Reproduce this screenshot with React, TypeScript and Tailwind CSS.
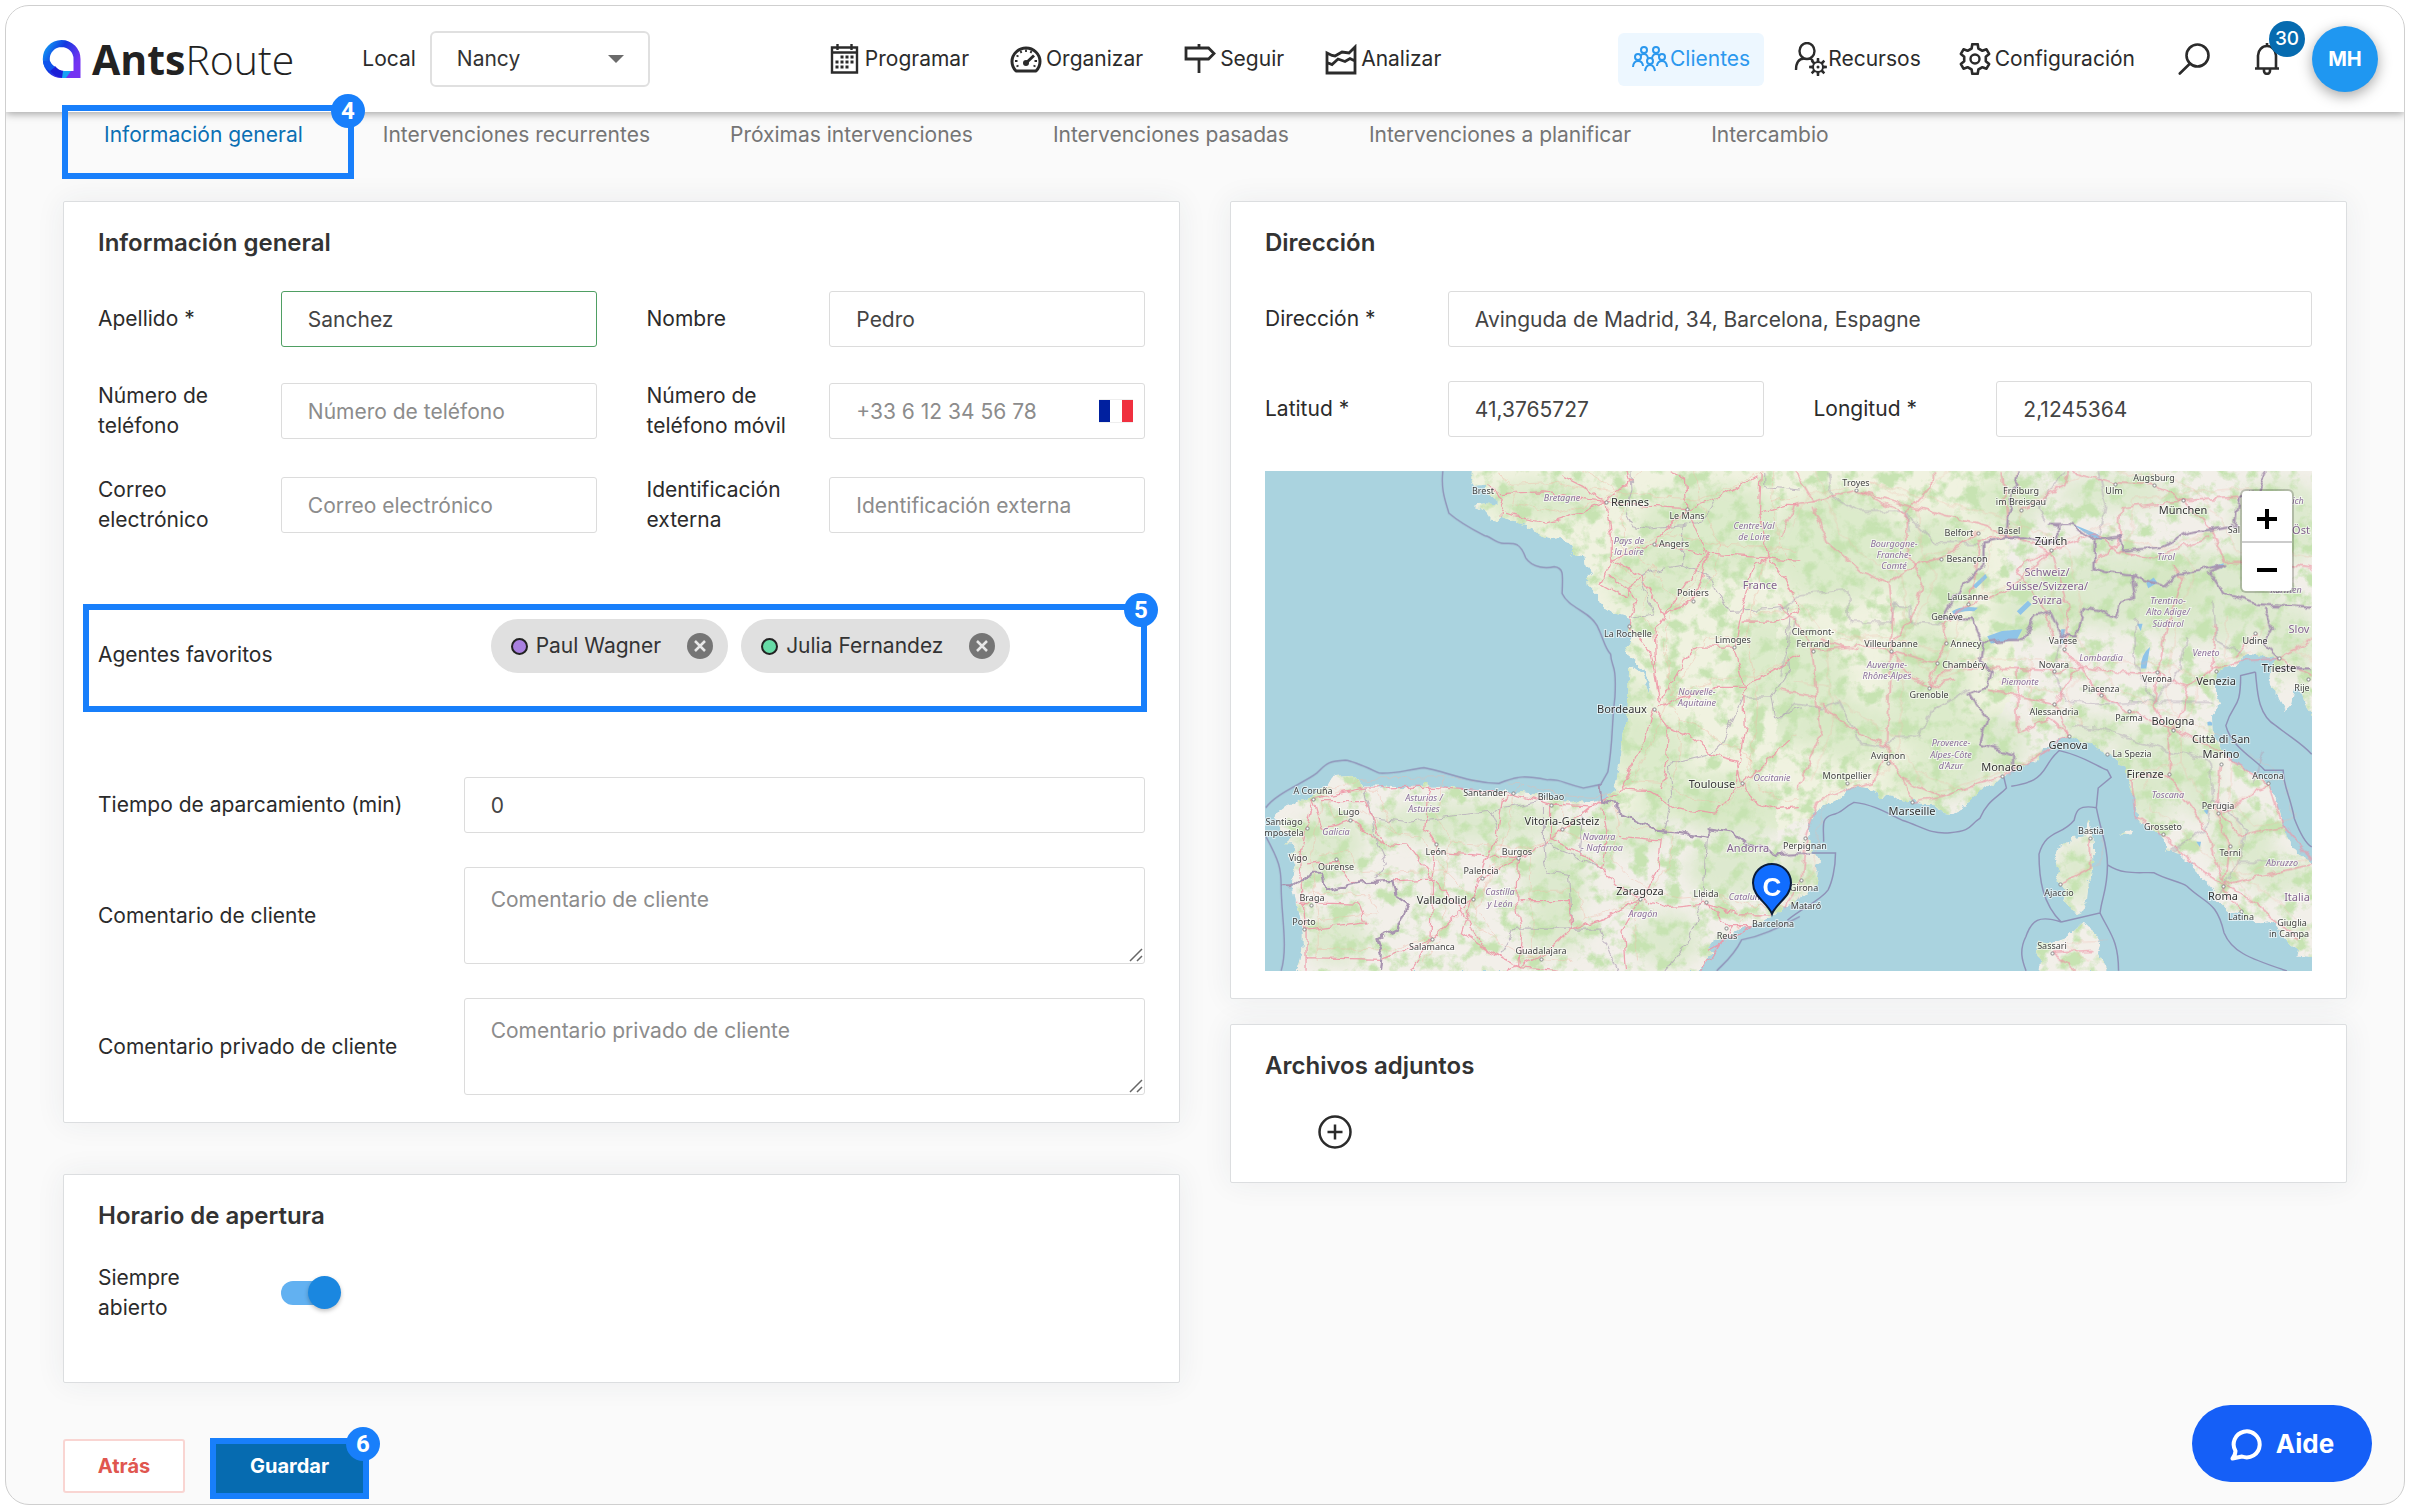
import React, { useState } from "react";

type Pt = [number, number];

/* ---------- icons ---------- */

const line = { fill: "none", stroke: "currentColor", strokeWidth: 2.4 } as const;

function LogoMark() {
  return (
    <svg viewBox="0 0 40 40" className="h-10 w-10" aria-hidden="true">
      <defs>
        <linearGradient id="mark" x1="0" y1="0" x2="1" y2="0.6">
          <stop offset="0" stopColor="#129af5" />
          <stop offset="0.45" stopColor="#1238e0" />
          <stop offset="1" stopColor="#7433f2" />
        </linearGradient>
      </defs>
      <path
        d="M19.500 4.500A15.500 15.500 0 0 1 35 20V35.500H20A15.500 15.500 0 0 1 19.500 4.500Z"
        fill="none"
        stroke="url(#mark)"
        strokeWidth="7"
      />
      <path d="M8 31.500 13 27Q17 31.800 22 32L21 39Q12 38 8 31.500Z" fill="#1c1fd6" />
      <path d="M21 32H29L24 39H20Z" fill="#1aa2f5" />
      <path d="M1 22H8Q9 25 13 28L8 32Q1 28 1 22Z" fill="#0f55ec" />
    </svg>
  );
}

function CalendarIcon() {
  const dots: Pt[] = [];
  [13, 18, 23].forEach((y, r) =>
    [7, 12, 17, 22].forEach((x, c) => {
      if (!(r === 0 && c === 0) && !(r === 2 && c === 3)) dots.push([x, y]);
    })
  );
  return (
    <svg viewBox="0 0 29 30" className="h-[30px] w-[29px]" aria-hidden="true">
      <path d="M2 3.500H27V28.500H2ZM2 8.500H27M7.500 0V6M21.500 0V6" {...line} />
      {dots.map(([x, y]) => (
        <rect key={`${x}-${y}`} x={x - 1.5} y={y - 1.5} width="3" height="3" fill="currentColor" />
      ))}
    </svg>
  );
}

function GaugeIcon() {
  return (
    <svg viewBox="0 0 32 28" className="h-7 w-8" aria-hidden="true">
      <path d="M6 26A14 13.500 0 1 1 26 26Z" {...line} strokeWidth={3} strokeLinejoin="round" />
      <path d="M16 18 24 10.500" stroke="currentColor" strokeWidth="3" />
      <circle cx="16" cy="18" r="3" fill="currentColor" />
      <path
        d="M16 4.500V7M10.500 6 11.500 8M21.500 6 20.500 8M6.500 10.500 8.500 11.500M5 16H7.500M24.500 16H27M6.500 21.500 8.500 20.500M25.500 21.500 23.500 20.500"
        stroke="currentColor"
        strokeWidth="1.800"
      />
    </svg>
  );
}

function SignIcon() {
  return (
    <svg viewBox="0 0 32 30" className="h-[30px] w-8" aria-hidden="true">
      <path d="M2 4H24.500L30 9.500 24.500 15H2ZM15 0V4M15 15V29" {...line} strokeWidth={2.800} />
    </svg>
  );
}

function AreaChartIcon() {
  return (
    <svg viewBox="0 0 32 31" className="h-[31px] w-8" aria-hidden="true">
      <path d="M2 9V29H30V3L24 9 17 8 10 12 7 11.500 2 9ZM2 18.500 7 20.500 13 15 20 17.500 25 14.500 30 17" {...line} strokeWidth={2.800} />
    </svg>
  );
}

function PeopleIcon() {
  const person = (x: number, y: number) => (
    <g key={`${x}-${y}`}>
      <circle cx={x} cy={y} r="3" />
      <path d={`M${x - 5} ${y + 10}Q${x - 4} ${y + 4} ${x} ${y + 4}T${x + 5} ${y + 10}`} />
    </g>
  );
  return (
    <svg viewBox="0 0 36 26" className="h-[26px] w-9" {...line} strokeWidth={2} aria-hidden="true">
      <circle cx="12" cy="4" r="3" />
      <circle cx="24" cy="4" r="3" />
      <circle cx="6" cy="11" r="3" />
      <circle cx="30" cy="11" r="3" />
      <path d="M1 21Q1.500 15 6 15T11 20M25 20Q25.500 15 30 15T35 21" />
      <path d="M8.500 10Q9 8 12 8T16 12M20 12Q21 8 24 8T27.500 10" />
      {person(18, 15)}
    </svg>
  );
}

function gear(cx: number, cy: number, outer: number, inner: number, teeth: number) {
  const step = (Math.PI * 2) / teeth;
  const points: string[] = [];
  for (let i = 0; i < teeth; i++) {
    const a = i * step - Math.PI / 2;
    [
      [-0.3, inner],
      [-0.17, outer],
      [0.17, outer],
      [0.3, inner],
    ].forEach(([k, r]) => points.push(`${(cx + r * Math.cos(a + k * step)).toFixed(1)} ${(cy + r * Math.sin(a + k * step)).toFixed(1)}`));
  }
  return `M${points.join("L")}Z`;
}

function UserGearIcon() {
  return (
    <svg viewBox="0 0 34 34" className="h-[34px] w-[34px]" aria-hidden="true">
      <ellipse cx="13" cy="9" rx="7.500" ry="8" {...line} />
      <path d="M2 28Q2 17 10 16.500M16 16.500Q18 17.500 19 19" {...line} />
      <path d={gear(24, 25, 9, 6, 8)} fill="currentColor" />
      <circle cx="24" cy="25" r="4" fill="#fff" />
      <circle cx="24" cy="25" r="1.500" fill="currentColor" />
    </svg>
  );
}

function GearIcon() {
  return (
    <svg viewBox="0 0 32 32" className="h-8 w-8" aria-hidden="true">
      <path d={gear(16, 16, 15, 11, 6)} {...line} strokeWidth={2.600} strokeLinejoin="round" />
      <circle cx="16" cy="16" r="4.500" {...line} />
    </svg>
  );
}

function SearchIcon() {
  return (
    <svg viewBox="0 0 32 32" className="h-8 w-8" {...line} strokeWidth={2.600} strokeLinecap="round" aria-hidden="true">
      <circle cx="19.500" cy="12.500" r="11" />
      <path d="M12 20.500 1.800 30.500" />
    </svg>
  );
}

function BellIcon() {
  return (
    <svg viewBox="0 0 26 32" className="h-8 w-[26px]" {...line} strokeWidth={2.600} aria-hidden="true">
      <path d="M1 25.500H25M4 25V12.500A9 9.500 0 0 1 22 12.500V25M13 0V3.500M10 26V28A3 2.800 0 0 0 16 28V26" />
    </svg>
  );
}

/* ---------- map ---------- */

interface Sheet {
  ox: number;
  oy: number;
  sx: number;
  sy: number;
}
const WEST: Sheet = { ox: -25, oy: -31, sx: 0.357, sy: 0.357 };
const EAST: Sheet = { ox: 515, oy: -31, sx: 0.37, sy: 0.357 };

const westLand =
  "M650 80 648 110 655 128 690 125 682 142 700 150 722 168 722 182 690 178 655 180 668 192 690 200 700 225 715 228 728 212 745 222 775 232 805 238 825 255 845 268 870 275 895 272 905 285 925 292 935 305 925 318 945 325 965 330 968 350 985 372 972 385 975 410 1000 435 1010 462 1045 485 1090 495 1095 510 1090 530 1100 550 1090 570 1080 580 1085 600 1110 620 1130 645 1145 680 1155 720 1140 690 1125 655 1098 632 1090 640 1088 700 1085 780 1075 820 1068 880 1055 950 1045 985 1020 1005 985 1015 940 1010 920 1015 880 1005 850 1000 820 990 790 985 765 990 740 985 700 987 650 985 620 978 580 972 545 975 520 960 500 970 450 972 400 970 345 970 330 950 310 938 275 940 255 945 240 970 215 985 200 1000 160 1015 130 1025 110 1040 95 1060 110 1080 120 1100 150 1110 125 1130 145 1130 155 1150 135 1165 155 1190 150 1215 148 1250 155 1290 165 1340 175 1380 175 1420 165 1460 155 1490 1285 1490 1310 1450 1330 1435 1310 1420 1330 1405 1370 1385 1410 1370 1440 1355 1490 1335 1525 1318 1525 80Z";
const eastLand =
  "M-10 80 -10 1322 30 1300 70 1275 100 1245 105 1210 95 1190 115 1185 100 1170 85 1160 80 1120 78 1080 90 1045 120 1025 150 1010 180 985 200 970 235 975 265 990 270 1003 300 995 320 1010 350 1015 360 995 375 1018 420 1020 440 1045 465 1048 500 1030 520 1000 550 975 585 960 600 945 630 930 655 915 690 900 710 870 740 845 780 828 805 840 840 850 880 880 900 885 915 905 935 930 945 975 960 1010 965 1060 975 1075 1010 1090 1035 1115 1045 1150 1080 1160 1110 1190 1130 1220 1160 1245 1180 1290 1210 1320 1250 1330 1290 1355 1330 1350 1360 1390 1380 1415 1400 1425 1395 1445 1450 1450 1450 1195 1400 1160 1370 1110 1355 1050 1330 980 1300 945 1250 920 1210 890 1185 850 1170 810 1168 770 1190 740 1180 710 1175 670 1190 645 1230 630 1265 600 1310 605 1345 612 1325 640 1320 680 1345 720 1365 757 1385 740 1390 700 1405 690 1425 750 1450 790 1450 80Z" +
  "M835 1062 848 1110 850 1180 835 1240 830 1290 810 1330 780 1310 765 1290 770 1265 745 1230 755 1210 740 1175 750 1145 790 1115 825 1110 828 1080Z" +
  "M700 1490 705 1460 690 1440 695 1405 730 1410 770 1395 815 1352 840 1365 865 1410 860 1440 880 1470 880 1490ZM918 1102 935 1094 955 1094 950 1106Z";

const westRoads =
  "M690 125 730 150 850 145 930 160 1024 172M728 212 740 170 690 125M740 205 860 230 960 200 1024 172M1024 172 1140 185 1252 192 1340 160 1450 100M1024 172 1040 260 1040 335M1024 172 1095 110 1080 87M1024 172 960 130 900 100M1252 192 1245 110 1200 87M1252 192 1200 240 1160 290M1252 192 1310 320 1295 390 1268 450 1190 490M1040 335 1160 290 1310 320 1480 330 1568 340M1040 335 1120 380 1190 490 1250 400 1310 320M1040 335 1010 400 1080 440 1120 380M1090 520 1110 440 1030 380M1190 490 1160 540 1165 640 1175 740M1090 520 1150 590 1170 700M1175 740 1250 610 1280 580 1384 580M1384 580 1405 480 1440 350 1480 330 1455 200 1460 87M1384 580 1410 690 1415 800 1390 960M1170 750 1230 720 1330 690 1410 690 1520 630 1568 600M1159 752 1200 805 1260 830 1320 880 1390 900 1405 960M1159 752 1130 850 1090 930 1060 990 985 1025M1200 805 1195 900 1180 980M1060 980 1150 985 1220 1030 1330 1045 1405 962 1430 1010 1500 1035 1568 1030M1480 330 1530 390 1568 480M1405 510 1500 510 1568 480M1455 200 1530 180 1568 182M1405 960 1440 930 1540 840" +
  "M205 1005 230 1090 310 1065 400 1130 470 1135 540 1230 600 1290 690 1430 780 1475M205 1005 180 1110 165 1190 185 1370 185 1487M205 1005 345 975 535 972 640 980 765 990 870 1020 985 1025M535 972 515 1080 550 1132 540 1230 535 1400 480 1487M550 1155 695 1165 780 1170 870 1120 985 1025M765 990 735 1010 720 1110 690 1170 650 1285M780 1170 680 1225 650 1285 535 1400 400 1455 185 1450M185 1190 270 1180 310 1240 540 1230M780 1170 775 1300 790 1380 780 1475M870 1120 960 1160 1010 1200 1060 1250 1120 1285M870 1020 870 1120M1120 1285 1170 1210 1180 1120 1060 1110M1120 1285 1020 1340 930 1370 850 1440 780 1475 740 1487M1120 1285 1200 1310 1305 1300 1400 1330 1490 1330M1120 1285 1070 1370 1080 1487M1305 1300 1370 1360 1430 1360 1310 1430M155 1295 330 1300 350 1350 185 1370M400 1130 350 1010 230 1010M780 1475 900 1487M650 1285 620 1380 690 1430M1010 1030 1030 1100 1010 1200M1380 1360 1290 1487M930 1370 920 1290 780 1290";
const eastRoads =
  "M0 270 40 180 90 170 205 140 340 205 420 110 420 87M90 170 40 87M205 140 330 180 560 240 620 275M90 190 130 290 220 370 295 400 365 350 435 330 540 260M340 205 345 320 385 400 365 480 300 580M295 400 305 490 300 580M0 460 50 520 90 590 230 575 300 590 420 625 450 560 440 520 500 465 620 420 730 310M90 590 100 720 110 820 50 980M110 740 180 800 290 860M300 590 295 700 290 880 330 950 358 1010M300 590 360 670 402 690 470 670M420 625 402 690 450 640 550 640 640 640M290 880 250 960 190 975 100 1010 70 1110 60 1230 10 1310M330 950 440 1000 540 960 600 940 690 890 780 825M358 1015 440 1000M640 640 740 648 810 635 900 650 1020 655 1100 690 1175 640 1240 620 1345 612M810 635 770 585 780 480 735 310M810 635 867 715 942 758 1060 810M810 635 740 740 780 825M640 640 645 820 730 780 780 825M740 740 620 710 560 700M1020 655 1040 540 1090 390 1060 350M1020 655 1010 740 1050 810 1050 935M1060 810 1170 860 1250 920 1320 965 1360 1080 1437 1180M1050 935 1090 1000 1150 1090 1200 1240M1050 935 950 950 960 1050 1035 1105 1110 1180 1195 1245M1190 1045 1250 1110 1360 1085M1200 1245 1300 1220 1437 1190M1200 1245 1290 1300 1400 1400M1195 1245 1245 1318M1090 170 1010 125 905 120 780 87M1090 170 1170 260 1200 340 1340 340 1437 360M1090 170 920 190 915 290 850 340M1090 170 1240 160M620 275 600 87M650 195 770 130 780 87M735 310 850 260 910 310 1010 330 1160 270M730 310 640 360 720 480 740 560M735 310 620 270 540 280 530 370 510 455M1175 520 1170 640M1285 540 1230 610M1350 612 1437 560M1345 612 1437 660M1190 910 1180 1040 1215 1135 1200 1240M1320 965 1250 1010 1190 1045M1100 690 1090 760 1060 810M838 1115 840 1200 760 1245M735 1435 850 1430M735 1435 800 1487M0 700 100 720M215 590 110 560";

const westMinor =
  "M1095 87 1098 140 1080 200 1100 240 1140 250 1240 240 1290 230 1330 170M1240 240 1240 350 1180 360 1120 380 1160 490 1090 500M1240 350 1310 380 1370 480 1490 475 1540 470M1470 87 1470 130 1568 140M1540 470 1530 580 1540 640 1490 720 1500 780 1568 750M1490 720 1410 720 1350 850 1320 880 1200 910 1210 1000 1190 1090M345 975 370 1060 460 1070 700 1040 720 1090M370 1060 380 1120 410 1190 380 1230M700 1040 850 1010 850 1130 950 1170 1010 1200M850 1130 860 1210 920 1220 930 1370 1010 1370 1060 1487M960 1040 950 1160M930 1370 770 1370 730 1440M1310 1100 1300 1280 1260 1400 1190 1487";
const eastMinor =
  "M130 87 140 160 210 200 340 200 350 260M0 480 60 430 180 420 190 510 300 510 310 460 350 465 350 510 440 515M340 205 420 290 540 290M0 660 40 500M0 780 40 740 110 750 160 730 220 850 290 860 310 830 380 830 410 760 510 700M770 87 700 190 720 230M860 87 880 190 860 270M770 530 740 640 770 730 850 740 1000 735 1170 735M790 800 870 810 1050 870 1100 880 1160 900M960 500 960 620 1010 735M1100 550 1080 640 1010 735M1170 450 1180 560 1250 600M1160 900 1170 1000 1150 1090 1060 1150M1170 1000 1260 1090 1240 1180 1180 1290M1240 1180 1400 1180M1310 870 1280 960";
const westBorders =
  "M1010 965 1014 1010 1060 1020 1060 1045 1130 1075 1170 1095 1230 1100 1310 1115 1310 1090 1380 1100 1420 1130 1480 1145 1500 1165 1525 1160M115 1250 148 1250 200 1215 230 1215 240 1260 330 1240 430 1235 440 1280 470 1300 440 1370 385 1395 400 1440 395 1487";
const eastBorders =
  "M0 1160 85 1155M645 87 620 190 610 275 660 275 750 290 750 240 730 235 790 235 850 280 920 270 930 310 1030 300 1100 260 1170 250 1230 240 1240 160 1290 140 1310 87M850 280 850 360 880 370 950 380 960 440 920 450 910 500 860 480 820 470 800 550 760 550 730 480 690 490 660 560 610 560 550 570 520 500 440 500 490 410 550 350 550 290 610 275M550 570 540 620 570 650 560 690 510 710 560 780 540 850 630 880 630 930M950 380 1040 410 1080 375 1200 350 1160 370 1200 430 1290 460 1437 470M1310 470 1330 530 1310 570 1350 610M1340 640 1437 640";
const westMaritime =
  "M568 87C562 140 575 170 585 205C620 235 660 255 685 268C700 268 715 290 740 290C770 288 785 288 800 330C820 360 860 360 880 355C905 358 905 370 902 430C920 470 980 480 1000 520C1020 560 1020 580 1038 600C1040 640 1055 620 1050 720C1040 800 1045 850 1030 930L1010 965 962 975C900 960 900 950 860 952C800 940 780 940 725 962C640 960 580 930 515 918C460 925 440 935 390 933C350 915 320 900 295 897C240 900 240 910 215 933C180 960 100 990 72 1030M72 1110C110 1180 115 1200 115 1250C115 1330 135 1420 115 1487M1568 1335C1500 1370 1460 1390 1405 1400C1380 1450 1350 1470 1335 1487";
const eastMaritime =
  "M85 1157H150C150 1200 140 1240 130 1260C110 1290 60 1310 20 1345M118 1125C118 1080 110 1060 140 1050C170 1045 170 1030 200 1015C250 1020 290 1045 330 1065C380 1080 400 1105 460 1100C520 1095 510 1080 540 1060C560 1010 590 1000 612 975L605 945M625 970C680 960 700 950 720 915C740 880 745 880 755 870C820 885 850 910 885 925L895 945 860 975 855 1030M855 1030C800 1020 800 1045 795 1065C760 1110 720 1090 700 1160C700 1230 710 1300 760 1350C700 1330 680 1345 665 1390C645 1430 655 1460 665 1487M855 1030C870 1110 885 1130 885 1190C885 1260 870 1280 865 1325L760 1350M865 1325C890 1380 915 1400 915 1487M885 1190C930 1220 970 1210 1010 1212C1050 1235 1080 1235 1100 1250C1150 1300 1180 1290 1200 1380C1220 1430 1260 1450 1370 1487M1285 650 1245 660C1245 760 1225 730 1205 800C1220 860 1280 890 1310 925H1360C1360 970 1380 1000 1390 1060C1405 1100 1420 1130 1437 1140M1285 650C1290 700 1290 770 1340 800C1390 840 1410 850 1437 880";

/* [sheet x, sheet y, text]; x and y are the centre of the line */
type Label = [number, number, string];
const westTowns: Label[] = [
  [682, 142, "Brest"], [1252, 212, "Le Mans"], [1217, 290, "Angers"], [1270, 429, "Poitiers"], [1088, 544, "La Rochelle"],
  [1382, 560, "Limoges"], [204, 982, "A Coruña"], [306, 1043, "Lugo"], [124, 1070, "Santiago"], [124, 1101, "mpostela"],
  [163, 1171, "Vigo"], [269, 1196, "Ourense"], [549, 1153, "León"], [777, 1153, "Burgos"], [675, 1208, "Palencia"], [201, 1284, "Braga"],
  [178, 1349, "Porto"], [537, 1421, "Salamanca"], [842, 1432, "Guadalajara"], [686, 988, "Santander"], [870, 1001, "Bilbao"],
  [1304, 1273, "Lleida"], [1363, 1388, "Reus"], [1494, 1356, "Barcelona"],
];
const eastTowns: Label[] = [
  [206, 120, "Troyes"], [650, 143, "Freiburg"], [650, 174, "im Breisgau"], [903, 143, "Ulm"], [1010, 107, "Augsburg"], [483, 260, "Belfort"],
  [620, 254, "Basel"], [505, 333, "Besançon"], [507, 440, "Lausanne"], [450, 496, "Genève"], [90, 539, "Clermont-"], [90, 571, "Ferrand"],
  [301, 571, "Villeurbanne"], [503, 571, "Annecy"], [497, 629, "Chambéry"], [402, 715, "Grenoble"], [765, 564, "Varese"], [741, 629, "Novara"],
  [867, 697, "Piacenza"], [741, 762, "Alessandria"], [942, 780, "Parma"], [1020, 670, "Verona"], [1285, 562, "Udine"], [292, 885, "Avignon"],
  [182, 942, "Montpellier"], [950, 880, "La Spezia"], [1318, 941, "Ancona"], [1185, 1026, "Perugia"], [1035, 1085, "Grosseto"], [1215, 1157, "Terni"],
  [840, 1094, "Bastia"], [755, 1269, "Ajaccio"], [735, 1417, "Sassari"], [1245, 1337, "Latina"], [1384, 1353, "Giuglia"], [1376, 1385, "in Campa"],
  [68, 1137, "Perpignan"], [66, 1256, "Girona"], [69, 1306, "Mataró"], [1411, 696, "Rije"], [1226, 252, "Sal"],
];
const westCities: Label[] = [
  [1093, 174, "Rennes"], [1071, 754, "Bordeaux"], [1323, 963, "Toulouse"], [902, 1066, "Vitoria-Gasteiz"], [565, 1288, "Valladolid"], [1121, 1263, "Zaragoza"],
];
const eastCities: Label[] = [
  [732, 282, "Zürich"], [1089, 195, "München"], [778, 854, "Genova"], [600, 915, "Monaco"], [358, 1040, "Marseille"], [1062, 788, "Bologna"],
  [1192, 838, "Città di San"], [1192, 880, "Marino"], [986, 936, "Firenze"], [1178, 675, "Venezia"], [1349, 638, "Trieste"], [1196, 1276, "Roma"],
];
const westRegions: Label[] = [
  [901, 163, "Bretagne"], [1090, 282, "Pays de"], [1090, 313, "la Loire"], [1441, 240, "Centre-Val"], [1441, 272, "de Loire"], [1280, 706, "Nouvelle-"],
  [1280, 738, "Aquitaine"], [1490, 947, "Occitanie"], [515, 1003, "Asturias /"], [515, 1034, "Asturies"], [269, 1098, "Galicia"], [1006, 1112, "Navarra"],
  [1013, 1144, "- Nafarroa"], [728, 1267, "Castilla"], [728, 1299, "y León"], [1128, 1329, "Aragón"], [1420, 1280, "Cataluña"],
];
const eastRegions: Label[] = [
  [308, 291, "Bourgogne-"], [308, 323, "Franche-"], [308, 354, "Comté"], [289, 629, "Auvergne-"], [289, 660, "Rhône-Alpes"], [1042, 328, "Tirol"],
  [1048, 452, "Trentino-"], [1048, 483, "Alto Adige/"], [1048, 515, "Südtirol"], [867, 611, "Lombardia"], [648, 678, "Piemonte"], [1151, 597, "Veneto"],
  [461, 850, "Provence-"], [461, 882, "Alpes-Côte"], [461, 913, "d'Azur"], [1048, 993, "Toscana"], [1357, 1184, "Abruzzo"], [1368, 419, "Kärnten"], [1400, 172, "ich"],
];
const westCountries: Label[] = [[1457, 406, "France"], [1423, 1142, "Andorra"]];
const eastCountries: Label[] = [
  [721, 370, "Schweiz/"], [721, 409, "Suisse/Svizzera/"], [721, 449, "Svizra"], [1396, 1279, "Italia"], [1404, 529, "Slov"], [1407, 252, "Öst"],
];
const westDots: Pt[] = [
  [1024, 173], [1252, 192], [1161, 290], [1268, 450], [1090, 521], [1384, 580], [1159, 753], [1405, 962], [205, 1005], [307, 1065], [187, 1086], [269, 1173],
  [550, 1132], [780, 1172], [677, 1227], [652, 1287], [198, 1303], [180, 1370], [537, 1399], [843, 1453], [765, 988], [870, 1022], [901, 1090], [1305, 1295], [1362, 1366], [1120, 1286],
];
const eastDots: Pt[] = [
  [205, 140], [650, 195], [905, 122], [1010, 125], [1090, 168], [535, 260], [436, 332], [733, 308], [508, 458], [90, 590], [300, 590], [448, 568], [424, 626],
  [402, 694], [767, 585], [741, 648], [867, 714], [741, 740], [942, 758], [1020, 650], [1285, 541], [1349, 612], [1178, 648], [1062, 811], [780, 828], [292, 904],
  [182, 962], [358, 1015], [601, 942], [884, 880], [1050, 936], [1192, 908], [1318, 962], [1185, 1045], [1035, 1105], [1215, 1136], [838, 1115], [756, 1244],
  [735, 1437], [1196, 1248], [1245, 1319], [68, 1114], [58, 1233], [1427, 670],
];

const westWoods: [number, number, number, number][] = [
  [1150, 870, 110, 90], [1100, 740, 30, 80], [1400, 1040, 170, 70], [880, 1240, 90, 110], [640, 1070, 260, 60], [250, 1130, 100, 90], [1480, 620, 90, 130],
  [1290, 1000, 180, 70], [880, 1380, 90, 60], [270, 1400, 90, 70], [1080, 1100, 110, 50], [1330, 250, 220, 130], [850, 170, 160, 60], [1380, 1200, 130, 80], [1150, 400, 120, 80], [1200, 1400, 90, 80],
];
const eastWoods: [number, number, number, number][] = [
  [60, 700, 130, 160], [400, 700, 110, 190], [420, 350, 120, 140], [620, 170, 100, 80], [900, 420, 250, 110], [1150, 440, 200, 130], [700, 480, 130, 60],
  [570, 850, 100, 90], [420, 950, 130, 60], [850, 810, 90, 40], [1010, 900, 110, 90], [1000, 1020, 70, 60], [1130, 950, 50, 110], [1250, 1120, 90, 80],
  [800, 1210, 50, 90], [1350, 230, 130, 120], [150, 300, 180, 160], [1380, 560, 80, 100], [1350, 1220, 90, 50], [900, 150, 150, 50], [40, 1220, 60, 60], [200, 820, 110, 90],
];

function place(sheet: Sheet, x: number, y: number): Pt {
  return [Math.round(sheet.ox + x * sheet.sx), Math.round(sheet.oy + y * sheet.sy)];
}

function MapLabels({ sheet, items, className, rise }: { sheet: Sheet; items: Label[]; className: string; rise: number }) {
  return (
    <g className={className} textAnchor="middle" stroke="#ffffff" strokeOpacity="0.6" strokeWidth="2" paintOrder="stroke">
      {items.map(([x, y, text]) => {
        const [px, py] = place(sheet, x, y);
        return (
          <text key={text + x} x={px} y={py + rise}>
            {text}
          </text>
        );
      })}
    </g>
  );
}

function MapView() {
  const sheets = [
    { s: WEST, land: westLand, roads: westRoads, minor: westMinor, borders: westBorders, sea: westMaritime, woods: westWoods, dots: westDots },
    { s: EAST, land: eastLand, roads: eastRoads, minor: eastMinor, borders: eastBorders, sea: eastMaritime, woods: eastWoods, dots: eastDots },
  ];
  const tf = (s: Sheet) => `translate(${s.ox} ${s.oy}) scale(${s.sx} ${s.sy})`;
  return (
    <svg
      viewBox="0 0 1047 500"
      preserveAspectRatio="xMidYMid slice"
      className="block h-[500px] w-full bg-[#aad3df] font-['Noto_Sans',sans-serif]"
      role="img"
      aria-label="Mapa"
    >
      <defs>
        <filter id="terrain" x="0" y="0" width="1047" height="500" filterUnits="userSpaceOnUse" colorInterpolationFilters="sRGB">
          <feTurbulence type="fractalNoise" baseFrequency="0.13" numOctaves="3" seed="4" result="rough" />
          <feDisplacementMap in="SourceGraphic" in2="rough" scale="7" xChannelSelector="R" yChannelSelector="G" result="shape" />
          <feTurbulence type="fractalNoise" baseFrequency="0.06" numOctaves="5" seed="11" result="noise" />
          <feColorMatrix in="noise" values="0 0 0 0 0.78  0 0 0 0 0.89  0 0 0 0 0.7  4.5 0 0 0 -2.15" result="green" />
          <feComposite in="green" in2="shape" operator="in" result="patches" />
          <feMerge>
            <feMergeNode in="shape" />
            <feMergeNode in="patches" />
          </feMerge>
        </filter>
        <filter id="wander" x="0" y="0" width="1047" height="500" filterUnits="userSpaceOnUse">
          <feTurbulence type="fractalNoise" baseFrequency="0.09" numOctaves="2" seed="7" />
          <feDisplacementMap in="SourceGraphic" scale="9" xChannelSelector="R" yChannelSelector="G" />
        </filter>
        <filter id="soft" x="-20%" y="-20%" width="140%" height="140%">
          <feGaussianBlur stdDeviation="22" />
        </filter>
        <clipPath id="westClip">
          <path d={westLand} />
        </clipPath>
        <clipPath id="eastClip">
          <path d={eastLand} />
        </clipPath>
      </defs>
      <g filter="url(#terrain)">
        {sheets.map(({ s, land, woods }, i) => (
          <g key={i} transform={tf(s)} clipPath={i ? "url(#eastClip)" : "url(#westClip)"}>
            <path d={land} fill="#f2efe9" />
            <path d={i ? "M-10 80H600L640 700 400 1060 60 1060-10 1100Z" : "M600 80H1530V1090L1060 1040 1000 700Z"} fill="#f0f2e0" />
            <g filter="url(#soft)" fill="#d2e6c0" fillOpacity="0.65">
              {woods.map(([x, y, rx, ry], k) => (
                <ellipse key={k} cx={x} cy={y} rx={rx} ry={ry} />
              ))}
            </g>
          </g>
        ))}
      </g>
      <g transform={tf(EAST)} fill="#8fc4e8">
        <path d="M465 480Q490 462 535 470L525 480Q495 476 470 490ZM520 410 555 375 560 385 530 415ZM790 235 860 265 870 280 840 270ZM975 640Q975 600 1000 580L990 640ZM760 530H770L765 570H758ZM560 550 600 535 655 530 640 560 570 570ZM640 480 670 450 680 460 650 490ZM990 400 1010 385 1020 400 995 415ZM1165 355 1200 345 1195 360ZM965 515H980L975 535ZM1155 790Q1170 785 1168 800H1156ZM1125 1125H1138L1135 1140ZM1145 1038 1158 1035 1155 1050Z" />
      </g>
      <g filter="url(#wander)" fill="none">
        {sheets.map(({ s, roads, minor, borders }, i) => (
          <g key={i} transform={tf(s)}>
            <path d={minor} stroke="#b3a5b8" strokeWidth="3" strokeOpacity="0.75" />
            <path d={roads} stroke="#f3b7a8" strokeWidth="2" transform="translate(34 -26)" strokeOpacity="0.55" clipPath={i ? "url(#eastClip)" : "url(#westClip)"} />
            <path d={roads} stroke="#ee93a4" strokeWidth="3.500" strokeOpacity="0.85" />
            <path d={borders} stroke="#a894b0" strokeWidth="6" />
          </g>
        ))}
      </g>
      {sheets.map(({ s, sea }, i) => (
        <path key={i} d={sea} transform={tf(s)} fill="none" stroke="#8f92b8" strokeWidth="4" />
      ))}
      {sheets.map(({ s, dots }) =>
        dots.map(([x, y]) => {
          const [px, py] = place(s, x, y);
          return <rect key={`${px}-${py}`} x={px - 1} y={py - 1} width="3" height="3" rx="1" fill="#fff" stroke="#777" strokeWidth="0.800" />;
        })
      )}
      <MapLabels sheet={WEST} items={westRegions} className="fill-[#8b6f9b] text-[9px] italic" rise={3} />
      <MapLabels sheet={EAST} items={eastRegions} className="fill-[#8b6f9b] text-[9px] italic" rise={3} />
      <MapLabels sheet={WEST} items={westTowns} className="fill-[#444] text-[9px]" rise={3} />
      <MapLabels sheet={EAST} items={eastTowns} className="fill-[#444] text-[9px]" rise={3} />
      <MapLabels sheet={WEST} items={westCities} className="fill-[#333] text-[11px]" rise={4} />
      <MapLabels sheet={EAST} items={eastCities} className="fill-[#333] text-[11px]" rise={4} />
      <MapLabels sheet={WEST} items={westCountries} className="fill-[#84648f] text-[11px]" rise={4} />
      <MapLabels sheet={EAST} items={eastCountries} className="fill-[#84648f] text-[11px]" rise={4} />
      <g>
        <path d="M507 443C503 432 488 426 488 412A19 19 0 0 1 526 412C526 426 511 432 507 443Z" fill="#116dff" stroke="#0b1c3a" strokeWidth="2" />
        <text x="507" y="425" textAnchor="middle" className="fill-white font-['Liberation_Sans',sans-serif] text-[26px] font-bold">
          C
        </text>
      </g>
    </svg>
  );
}

/* ---------- building blocks ---------- */

function Highlight({ step, className }: { step: number; className: string }) {
  return (
    <div className={`pointer-events-none absolute z-20 border-[6px] border-[#187ffb] ${className}`}>
      <span className="absolute -top-[17px] -right-[17px] flex h-[34px] w-[34px] items-center justify-center rounded-full bg-[#187ffb] font-['Roboto',sans-serif] text-2xl leading-none font-bold text-white">
        {step}
      </span>
    </div>
  );
}

function Card({ title, className = "", children }: { title: string; className?: string; children: React.ReactNode }) {
  return (
    <section className={`rounded-[2px] border border-[#dcdee0] bg-white px-[34px] pt-[26px] shadow-[0_0_30px_rgba(40,50,70,0.07)] ${className}`}>
      <h2 className="text-2xl leading-[30px] font-semibold text-[#333]">{title}</h2>
      {children}
    </section>
  );
}

const field = "block w-full rounded-[3px] border bg-white px-[26px] text-[21px] text-[#444] outline-none placeholder:text-[#8c8c8c]";
const plain = "border-[#dcdcdc]";

interface FieldProps {
  id: string;
  label: string;
  value?: string;
  placeholder?: string;
  labelSpan?: string;
  span?: string;
  tone?: string;
}

function Field({ id, label, value, placeholder, labelSpan = "", span = "col-span-2", tone = plain }: FieldProps) {
  return (
    <>
      <label htmlFor={id} className={`-mr-6 leading-[30px] ${labelSpan}`}>
        {label}
      </label>
      <div className={span}>
        <input id={id} type="text" defaultValue={value} placeholder={placeholder} className={`${field} h-14 ${tone}`} />
      </div>
    </>
  );
}

function Area({ id, label }: { id: string; label: string }) {
  return (
    <>
      <label htmlFor={id} className="col-span-2 leading-[30px]">
        {label}
      </label>
      <div className="relative col-span-4">
        <textarea id={id} placeholder={label} className={`${field} ${plain} h-[97px] resize-none py-[17px] leading-[30px]`} />
        <svg viewBox="0 0 14 14" className="pointer-events-none absolute right-[2px] bottom-[2px] h-[14px] w-[14px]" stroke="#666" strokeWidth="1.500" aria-hidden="true">
          <path d="M1 13 13 1M8 13 13 8" />
        </svg>
      </div>
    </>
  );
}

function Chip({ name, dot }: { name: string; dot: string }) {
  return (
    <span className="flex h-[54px] items-center rounded-full bg-[#e0e0e0] pr-[15px] pl-5 text-[#333]">
      <span className={`mr-2 h-[17px] w-[17px] rounded-full border-2 border-[#222] ${dot}`} />
      {name}
      <button type="button" aria-label={`Quitar ${name}`} className="ml-[26px] flex h-[26px] w-[26px] items-center justify-center rounded-full bg-[#757575]">
        <svg viewBox="0 0 12 12" className="h-3 w-3" stroke="#e8e8e8" strokeWidth="2.500" aria-hidden="true">
          <path d="M1 1 11 11M11 1 1 11" />
        </svg>
      </button>
    </span>
  );
}

function NavLink({ icon, label, className = "" }: { icon: React.ReactNode; label: string; className?: string }) {
  return (
    <a href="#" className={`flex items-center ${className}`}>
      {icon}
      {label}
    </a>
  );
}

const tabs = ["Información general", "Intervenciones recurrentes", "Próximas intervenciones", "Intervenciones pasadas", "Intervenciones a planificar", "Intercambio"];

export default function App() {
  const [open, setOpen] = useState(true);
  const grid = "grid grid-cols-6 items-center gap-x-[50px] gap-y-[34px]";
  return (
    <div className="flex min-h-screen flex-col bg-white p-[5px] font-['Inter',sans-serif] text-[21px] text-[#2b2b2b]">
      <div className="flex-1 overflow-hidden rounded-3xl border border-[#cfcfcf] bg-[#fafafa]">
        <header className="relative z-10 flex h-[106px] items-center bg-white pr-[26px] pl-[36px] shadow-[0_2px_8px_rgba(0,0,0,0.35)]">
          <a href="#" className="flex items-center gap-[10px]" aria-label="AntsRoute">
            <LogoMark />
            <span className="font-['Open_Sans',sans-serif] text-[41px] leading-none font-light text-[#222]">
              <b className="font-bold">Ants</b>Route
            </span>
          </a>
          <div className="ml-[68px] flex items-center gap-[14px]">
            <label htmlFor="site">Local</label>
            <div className="relative">
              <select id="site" className="h-14 w-[220px] appearance-none rounded-md border-2 border-[#e0e0e0] bg-white pl-[25px] text-[#333]">
                <option>Nancy</option>
              </select>
              <svg viewBox="0 0 16 8" className="pointer-events-none absolute top-6 right-[26px] h-2 w-4" aria-hidden="true">
                <path d="M0 0H16L8 8Z" fill="#6b6b6b" />
              </svg>
            </div>
          </div>
          <nav className="ml-[180px] flex items-center gap-[41px]">
            <NavLink icon={<CalendarIcon />} label="Programar" className="gap-[6px]" />
            <NavLink icon={<GaugeIcon />} label="Organizar" className="gap-1" />
            <NavLink icon={<SignIcon />} label="Seguir" className="gap-1" />
            <NavLink icon={<AreaChartIcon />} label="Analizar" className="gap-1" />
          </nav>
          <nav className="ml-auto flex items-center">
            <NavLink icon={<PeopleIcon />} label="Clientes" className="h-[53px] gap-[2px] rounded-md bg-[#edf7ff] px-[14px] text-[#2b98ee]" />
            <NavLink icon={<UserGearIcon />} label="Recursos" className="ml-[30px]" />
            <NavLink icon={<GearIcon />} label="Configuración" className="ml-[38px] gap-1" />
            <button type="button" aria-label="Buscar" className="ml-[43px]">
              <SearchIcon />
            </button>
            <button type="button" aria-label="Notificaciones" className="relative ml-[44px]">
              <BellIcon />
              <span className="absolute -top-[22px] left-[15px] flex h-9 w-9 items-center justify-center rounded-full bg-[#066bb0] text-[19px] font-medium text-white">30</span>
            </button>
            <button type="button" className="ml-8 h-[66px] w-[66px] rounded-full bg-[#1f97f1] text-xl font-bold text-white shadow-[0_4px_14px_rgba(0,0,0,0.35)]">MH</button>
          </nav>
        </header>

        <nav className="relative z-20 flex pt-2 pl-[58px]">
          {tabs.map((tab, i) => (
            <a key={tab} href="#" className={`relative px-10 leading-[30px] ${i === 0 ? "text-[#0b6fb3]" : "text-[#757575]"}`}>
              {tab}
              {i === 0 && <Highlight step={4} className="-top-[15px] -right-[11px] -left-[2px] h-[74px]" />}
            </a>
          ))}
        </nav>

        <main className="grid grid-cols-2 items-start gap-x-[50px] px-[57px] pt-[51px] pb-[11px]">
          <form onSubmit={(e) => e.preventDefault()}>
            <Card title="Información general" className="pb-[27px]">
              <div className={`${grid} mt-[33px]`}>
                <Field id="last" label="Apellido *" value="Sanchez" tone="border-[#4f9f63]" />
                <Field id="first" label="Nombre" value="Pedro" />
                <Field id="phone" label="Número de teléfono" placeholder="Número de teléfono" />
                <label htmlFor="mobile" className="-mr-6 leading-[30px]">
                  Número de teléfono móvil
                </label>
                <div className="relative col-span-2">
                  <input id="mobile" type="tel" placeholder="+33 6 12 34 56 78" className={`${field} ${plain} h-14`} />
                  <span className="absolute top-4 right-3 flex h-6 w-[34px] border-y border-[#eee]">
                    <span className="flex-1 bg-[#00209f]" />
                    <span className="flex-1 bg-white" />
                    <span className="flex-1 bg-[#f0303f]" />
                  </span>
                </div>
                <Field id="mail" label="Correo electrónico" placeholder="Correo electrónico" />
                <Field id="ext" label="Identificación externa" placeholder="Identificación externa" />
              </div>
              <div className="relative mt-[69px] grid h-[108px] grid-cols-6 gap-x-[50px]">
                <span className="col-span-2 self-center pb-[6px]">Agentes favoritos</span>
                <div className="col-span-4 flex items-start gap-[13px] pt-[15px] pl-[27px]">
                  <Chip name="Paul Wagner" dot="bg-[#a980e0]" />
                  <Chip name="Julia Fernandez" dot="bg-[#66dba6]" />
                </div>
                <Highlight step={5} className="inset-y-0 -right-[2px] -left-[15px]" />
              </div>
              <div className={`${grid} mt-[65px]`}>
                <Field id="parking" label="Tiempo de aparcamiento (min)" value="0" labelSpan="col-span-2" span="col-span-4" />
                <Area id="comment" label="Comentario de cliente" />
                <Area id="private" label="Comentario privado de cliente" />
              </div>
            </Card>

            <Card title="Horario de apertura" className="mt-[51px] pb-[59px]">
              <div className="mt-8 grid grid-cols-6 items-center gap-x-[50px]">
                <label htmlFor="always" className="leading-[30px]">
                  Siempre abierto
                </label>
                <span className="relative block h-[34px] w-[60px]">
                  <span className={`absolute top-[5px] left-0 h-6 w-[52px] rounded-full ${open ? "bg-[#62b1f1]" : "bg-gray-300"}`} />
                  <span className={`absolute top-0 h-[33px] w-[33px] rounded-full shadow-[0_2px_4px_rgba(0,0,0,0.25)] ${open ? "left-[27px] bg-[#1a87e0]" : "left-0 bg-white"}`} />
                  <input id="always" type="checkbox" role="switch" checked={open} onChange={() => setOpen(!open)} className="absolute inset-0 cursor-pointer opacity-0" />
                </span>
              </div>
            </Card>

            <div className="mt-[56px] flex gap-[30px]">
              <button type="button" className="h-[54px] w-[122px] rounded-[3px] border-2 border-[#f9d5d2] bg-white text-xl font-bold text-[#e0564f]">
                Atrás
              </button>
              <button type="submit" className="relative h-[54px] w-[149px] bg-[#066bb0] text-xl font-bold text-white">
                Guardar
                <Highlight step={6} className="-top-[1px] -right-[5px] -bottom-[6px] -left-[5px]" />
              </button>
            </div>
          </form>

          <div>
            <Card title="Dirección" className="pb-[27px]">
              <div className={`${grid} mt-[33px]`}>
                <Field id="address" label="Dirección *" value="Avinguda de Madrid, 34, Barcelona, Espagne" span="col-span-5" />
                <Field id="lat" label="Latitud *" value="41,3765727" />
                <Field id="lng" label="Longitud *" value="2,1245364" />
              </div>
              <div className="relative mt-[34px]">
                <MapView />
                <div className="absolute top-[18px] right-[18px] flex flex-col overflow-hidden rounded-md border-2 border-black/20 bg-white bg-clip-padding">
                  {[
                    { label: "Acercar", d: "M0 10H20M10 0V20" },
                    { label: "Alejar", d: "M0 10H20" },
                  ].map(({ label, d }) => (
                    <button key={label} type="button" aria-label={label} className="flex h-[50px] w-[50px] items-center justify-center pt-[6px] not-first:border-t-2 not-first:border-[#ccc]">
                      <svg viewBox="0 0 20 20" className="h-5 w-5" stroke="#000" strokeWidth="4" aria-hidden="true">
                        <path d={d} />
                      </svg>
                    </button>
                  ))}
                </div>
              </div>
            </Card>

            <Card title="Archivos adjuntos" className="mt-[25px] pb-[33px]">
              <button type="button" aria-label="Añadir archivo" className="mt-[34px] ml-[53px] block">
                <svg viewBox="0 0 34 34" className="block h-[34px] w-[34px]" {...line} strokeWidth={2.500} aria-hidden="true">
                  <circle cx="17" cy="17" r="15.500" />
                  <path d="M9.500 17H24.500M17 9.500V24.500" />
                </svg>
              </button>
            </Card>
          </div>
        </main>
      </div>

      <button
        type="button"
        className="fixed right-[38px] bottom-7 z-30 flex h-[77px] w-[180px] items-center justify-center gap-[14px] rounded-full bg-[#155ff7] text-[26px] font-bold text-white"
      >
        <svg viewBox="0 0 32 34" className="h-[34px] w-8" fill="none" stroke="currentColor" strokeWidth="4" strokeLinejoin="round" strokeLinecap="round" aria-hidden="true">
          <path d="M5.500 24A13 13 0 1 1 12 29.500L2.500 31.500Q5 29 5.500 24Z" />
        </svg>
        Aide
      </button>
    </div>
  );
}
